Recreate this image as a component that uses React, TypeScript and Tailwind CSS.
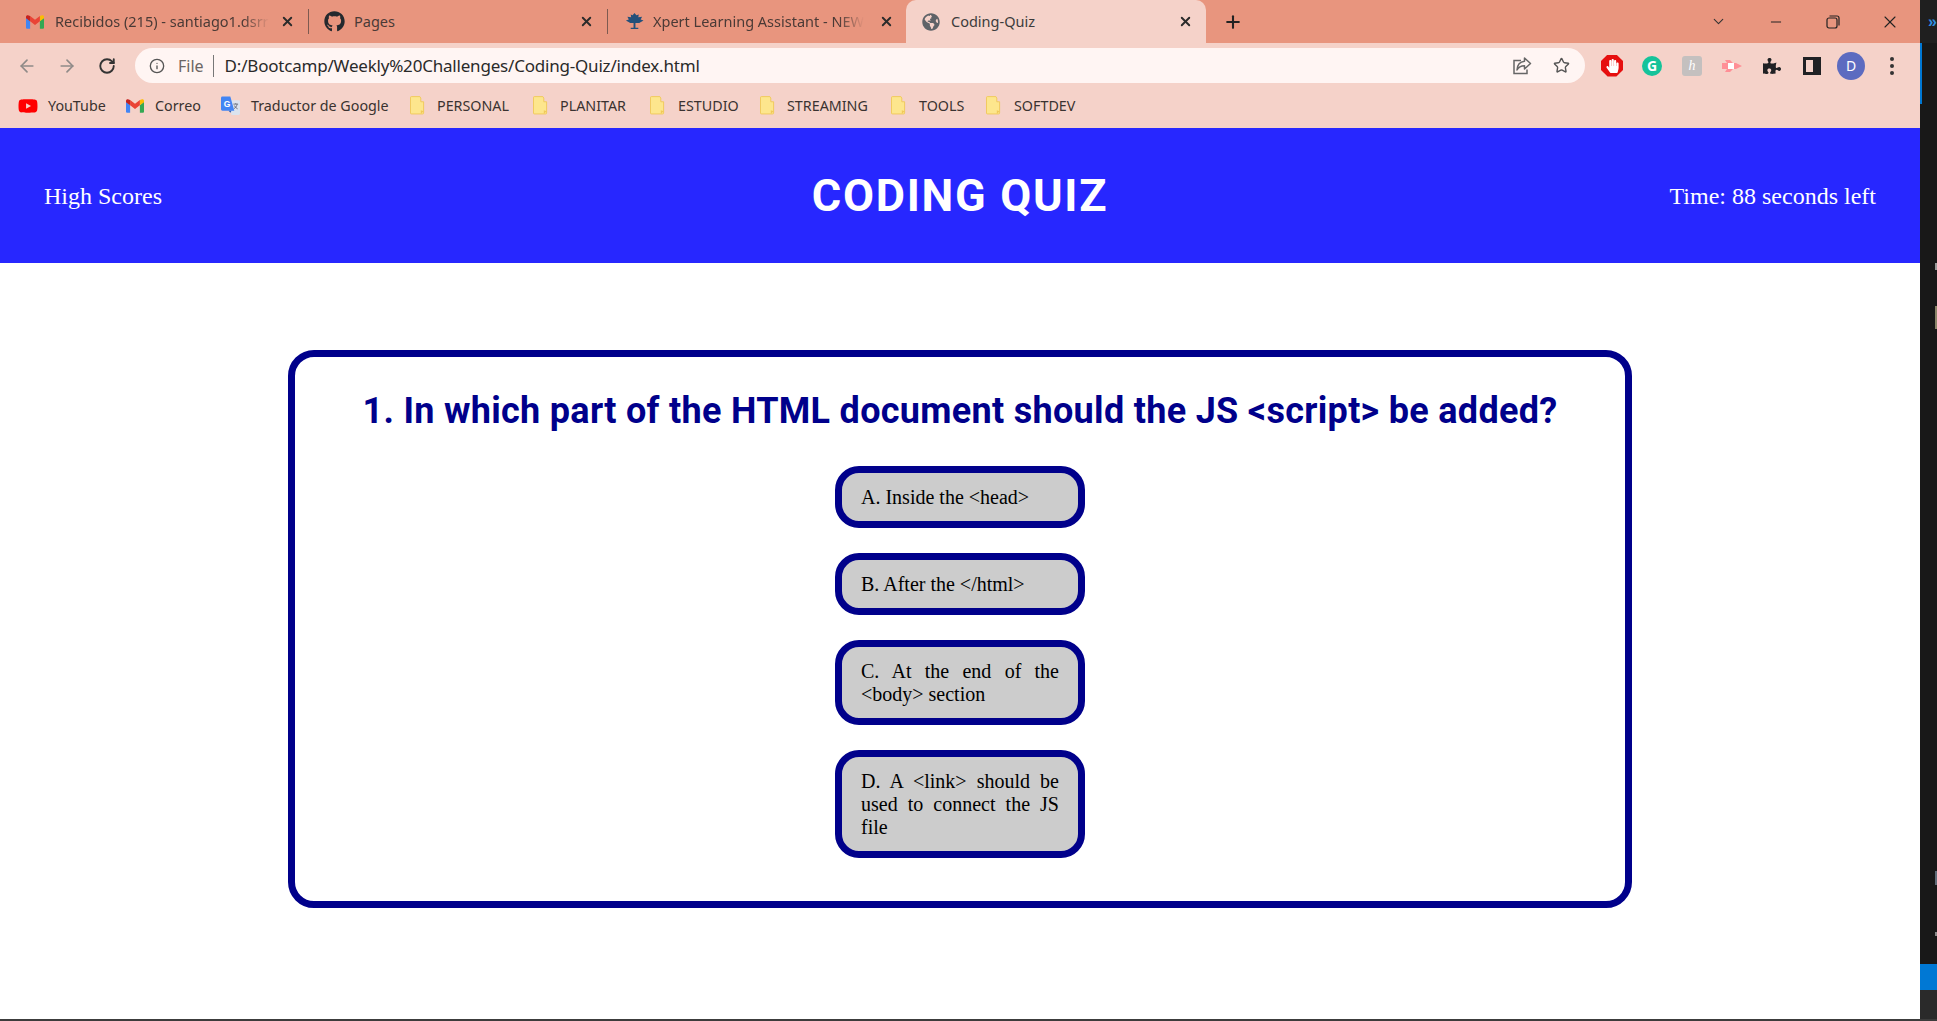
import { ChevronDown, Minus, X, Plus, ArrowLeft, ArrowRight, RotateCw, Info, Star } from 'lucide-react';
import { FaGithub, FaGlobeAmericas, FaPuzzlePiece, FaHandPaper, FaYoutube } from 'react-icons/fa';

const uiFont = "font-['Noto_Sans','Open_Sans',sans-serif]";

function GmailIcon({ className = 'w-[18px] h-[14px]' }: { className?: string }) {
  return (
    <svg viewBox="0 0 24 18" className={className}>
      <path d="M0 3v13.5A1.5 1.5 0 0 0 1.5 18H5.500V8z" fill="#4285f4" />
      <path d="M24 3v13.500a1.500 1.500 0 0 1-1.500 1.500H18.500V8z" fill="#34a853" />
      <path d="M18.500 1v7L24 4V2c0-1.800-2-2.700-3.400-1.700z" fill="#fbbc04" />
      <path d="M5.500 8V1L12 6l6.500-5v7L12 13z" fill="#ea4335" />
      <path d="M0 2v2l5.500 4V1L3.400.3C2 -.7 0 .2 0 2z" fill="#c5221f" />
    </svg>
  );
}

function TreeIcon() {
  return (
    <svg viewBox="0 0 20 20" className="w-[19px] h-[19px]" fill="#24507a">
      <path d="M10 1l2 2.500 2.500-1-.5 3 4-.5-1.500 3 3 1-4.500 2.500H11v5h3v1.500H6V16.500h3v-5H5.500L1 9l3-1-1.500-3 4 .5-.5-3L8 3.500z" />
    </svg>
  );
}

function TranslateIcon() {
  return (
    <svg viewBox="0 0 20 20" className="w-[19px] h-[20px]">
      <path d="M9 4h9.500A1.500 1.500 0 0 1 20 5.500V18a1.500 1.500 0 0 1-1.500 1.500H11z" fill="#dbe3ee" />
      <path d="M13 8h5M15.500 7v1M17 8c-.5 2.500-2 4-3.500 5M14 9.500c.7 1.500 2 2.800 3.500 3.500" stroke="#6b7280" strokeWidth="1" fill="none" />
      <path d="M1.500 0h8.300L14 15H1.500A1.500 1.500 0 0 1 0 13.500v-12A1.500 1.500 0 0 1 1.500 0z" fill="#4285f4" />
      <path d="M10 17l1-2h-3z" fill="#2f5fb5" />
      <text x="3" y="11" fontSize="9" fontWeight="700" fill="#fff" fontFamily="Liberation Sans">G</text>
    </svg>
  );
}

function Folder() {
  return (
    <svg viewBox="0 0 16 20" className="w-[15px] h-[19px]">
      <path d="M1.500.500h9l1 1.500v4h3v12a1 1 0 0 1-1 1h-12a1 1 0 0 1-1-1v-16.500a1 1 0 0 1 1-1z" fill="#fde68d" stroke="#f0c95a" />
      <path d="M11.500 15v4l3-3z" fill="#f0c95a" />
    </svg>
  );
}

function ShareIcon() {
  return (
    <svg viewBox="0 0 20 20" className="w-[20px] h-[20px] ml-auto" fill="none" stroke="#666" strokeWidth="1.500">
      <path d="M9 4.500H2v13h13v-4" />
      <path d="M12.500 2l6 5.500-6 5.500V9.800C9 9.800 6.500 11 5 14c.3-5 3-8.200 7.500-8.700z" strokeLinejoin="round" />
    </svg>
  );
}

function RestoreIcon() {
  return (
    <svg viewBox="0 0 14 14" className="w-[14px] h-[14px] ml-[42px]" fill="none" stroke="#222" strokeWidth="1.200">
      <rect x="1" y="3" width="10" height="10" rx="2" />
      <path d="M3.500 1h7.500a2 2 0 0 1 2 2v7.500" />
    </svg>
  );
}

const tabs = [
  { title: 'Recibidos (215) - santiago1.dsrr(', icon: <GmailIcon />, box: 'w-[309px] pl-[26px] pr-[14px]', gap: 'ml-[11px] w-[214px] [mask-image:linear-gradient(to_right,black_88%,transparent)]', line: true },
  { title: 'Pages', icon: <FaGithub className="w-[21px] h-[21px] text-[#24292e]" />, box: 'w-[299px] pl-[15px] pr-[14px]', gap: 'ml-[9px] w-[214px]', line: true },
  { title: 'Xpert Learning Assistant - NEW!', icon: <TreeIcon />, box: 'w-[298px] pl-[17px] pr-[12px]', gap: 'ml-[9px] w-[211px] [mask-image:linear-gradient(to_right,black_88%,transparent)]', line: false },
];

const bookmarks = [
  { label: 'YouTube', icon: <FaYoutube className="w-[20px] h-[20px] text-[#f00]" />, box: 'ml-[18px] w-[108px]', gap: 'ml-[10px]' },
  { label: 'Correo', icon: <GmailIcon />, box: 'w-[95px]', gap: 'ml-[11px]' },
  { label: 'Traductor de Google', icon: <TranslateIcon />, box: 'w-[189px]', gap: 'ml-[11px]' },
  { label: 'PERSONAL', icon: <Folder />, box: 'w-[123px]', gap: 'ml-[12px]' },
  { label: 'PLANITAR', icon: <Folder />, box: 'w-[117px]', gap: 'ml-[12px]' },
  { label: 'ESTUDIO', icon: <Folder />, box: 'w-[110px]', gap: 'ml-[13px]' },
  { label: 'STREAMING', icon: <Folder />, box: 'w-[131px]', gap: 'ml-[12px]' },
  { label: 'TOOLS', icon: <Folder />, box: 'w-[95px]', gap: 'ml-[13px]' },
  { label: 'SOFTDEV', icon: <Folder />, box: 'w-[100px]', gap: 'ml-[13px]' },
];

const answers = [
  'A. Inside the <head>',
  'B. After the </html>',
  'C. At the end of the <body> section',
  'D. A <link> should be used to connect the JS file',
];

function TabStrip() {
  return (
    <div className="h-[43px] bg-[#e8957e] flex items-center">
      {tabs.map((tab) => (
        <div key={tab.title} className={`h-[43px] flex items-center relative ${tab.box}`}>
          {tab.icon}
          <span className={`text-[14.5px] text-[#4a3a36] whitespace-nowrap overflow-hidden ${uiFont} ${tab.gap}`}>{tab.title}</span>
          <X className="w-[15px] h-[15px] text-[#2b2b2b] ml-auto" strokeWidth={3} />
          {tab.line && <div className="absolute right-0 top-[9px] h-[25px] w-px bg-[#7d5a50]" />}
        </div>
      ))}
      <div className="w-[300px] h-[43px] bg-[#f5d2c9] rounded-t-[10px] flex items-center pl-[16px] pr-[13px]">
        <FaGlobeAmericas className="w-[18px] h-[18px] text-[#5f6368]" />
        <span className={`ml-[11px] text-[14.5px] text-[#3c3c3c] ${uiFont}`}>Coding-Quiz</span>
        <X className="w-[15px] h-[15px] text-[#2b2b2b] ml-auto" strokeWidth={3} />
      </div>
      <Plus className="w-[20px] h-[20px] ml-[17px] text-[#222]" strokeWidth={2.5} />
      <ChevronDown className="w-[17px] h-[17px] ml-[467px] text-[#333]" strokeWidth={1.500} />
      <Minus className="w-[16px] h-[16px] ml-[41px] text-[#222]" strokeWidth={1.500} />
      <RestoreIcon />
      <X className="w-[20px] h-[20px] ml-[40px] text-[#222]" strokeWidth={1.300} />
    </div>
  );
}

function Toolbar() {
  return (
    <div className="h-[45px] bg-[#f5d2c9] flex items-center">
      <ArrowLeft className="w-[20px] h-[20px] ml-[17px] text-[#8f8a88]" strokeWidth={2} />
      <ArrowRight className="w-[20px] h-[20px] ml-[20px] text-[#8f8a88]" strokeWidth={2} />
      <RotateCw className="w-[18px] h-[18px] ml-[21px] text-[#333]" strokeWidth={2.500} />
      <div className="ml-[19px] w-[1450px] h-[35px] rounded-full bg-[#fff5f3] flex items-center">
        <Info className="w-[16px] h-[16px] ml-[14px] text-[#555]" strokeWidth={2} />
        <span className={`ml-[13px] text-[16px] text-[#6b6563] ${uiFont}`}>File</span>
        <div className="ml-[9px] w-px h-[22px] bg-[#777]" />
        <span className={`ml-[11px] text-[17px] tracking-[-0.2px] text-[#2a2a2a] ${uiFont}`}>D:/Bootcamp/Weekly%20Challenges/Coding-Quiz/index.html</span>
        <ShareIcon />
        <Star className="w-[17px] h-[17px] ml-[21px] mr-[15px] text-[#555]" strokeWidth={2} />
      </div>
      <div className="ml-[16px] w-[22px] h-[22px] bg-[#e60f0f] [clip-path:polygon(30%_0,70%_0,100%_30%,100%_70%,70%_100%,30%_100%,0_70%,0_30%)] flex items-center justify-center">
        <FaHandPaper className="w-[13px] h-[14px] text-white" />
      </div>
      <div className={`ml-[19px] w-[20px] h-[20px] rounded-full bg-[#15c39a] flex items-center justify-center text-white text-[14px] font-bold ${uiFont}`}>G</div>
      <div className="ml-[20px] w-[20px] h-[20px] rounded-[3px] bg-[#c4c0bf] flex items-center justify-center text-white text-[14px] italic font-['Liberation_Serif',serif]">h</div>
      <svg viewBox="0 0 20 16" className="ml-[20px] w-[20px] h-[16px]">
        <path d="M0 5h5L3 2h5l3 3h3l6 3-6 3h-3l-3 3H3l2-3H0z" fill="#ff8f96" />
        <rect x="6" y="5" width="6" height="6" fill="#fff" />
      </svg>
      <FaPuzzlePiece className="ml-[21px] w-[18px] h-[18px] text-[#202124]" />
      <div className="ml-[22px] w-[18px] h-[18px] bg-[#202124] flex pl-[3px] py-[3px] pr-[8px]">
        <div className="flex-1 bg-[#f5d2c9]" />
      </div>
      <div className={`ml-[16px] w-[28px] h-[28px] rounded-full bg-[#5c6bc0] flex items-center justify-center text-white text-[14px] ${uiFont}`}>D</div>
      <div className="ml-[25px] flex flex-col gap-[3px]">
        <div className="w-[4px] h-[4px] rounded-full bg-[#333]" />
        <div className="w-[4px] h-[4px] rounded-full bg-[#333]" />
        <div className="w-[4px] h-[4px] rounded-full bg-[#333]" />
      </div>
    </div>
  );
}

function Bookmarks() {
  return (
    <div className="h-[40px] pb-[5px] bg-[#f5d2c9] flex items-center">
      {bookmarks.map((b) => (
        <div key={b.label} className={`flex items-center ${b.box}`}>
          {b.icon}
          <span className={`text-[14.3px] text-[#3a3230] whitespace-nowrap ${uiFont} ${b.gap}`}>{b.label}</span>
        </div>
      ))}
    </div>
  );
}

export default function App() {
  return (
    <div className="w-[1937px] h-[1021px] flex flex-col overflow-hidden bg-white">
      <div className="flex flex-1 min-h-0">
        <div className="w-[1920px] flex flex-col">
          <TabStrip />
          <Toolbar />
          <Bookmarks />
          <header className="h-[135px] bg-[#2727ff] flex items-center justify-between pl-[44px] pr-[44px] text-white font-['Liberation_Serif',serif] text-[24px]">
            <span className="w-[400px]">High Scores</span>
            <h1 className="text-[45px] font-bold tracking-[1.7px] font-['Roboto',sans-serif]">CODING QUIZ</h1>
            <span className="w-[400px] text-right">Time: 88 seconds left</span>
          </header>
          <main className="flex-1 pt-[87px] pl-[288px]">
            <div className="w-[1344px] h-[558px] border-[7px] border-[#00008b] rounded-[26px] flex flex-col items-center pt-[32px]">
              <h2 className="text-[36px] leading-[44px] font-bold tracking-[0.3px] text-[#00008b] font-['Roboto',sans-serif]">
                1. In which part of the HTML document should the JS &lt;script&gt; be added?
              </h2>
              <div className="mt-[33px] flex flex-col gap-[25px]">
                {answers.map((a) => (
                  <button key={a} className="w-[250px] border-[7px] border-[#00008b] rounded-[24px] bg-[#cccccc] px-[19px] py-[12.5px] text-justify text-[20px] leading-[23px] text-black font-['Liberation_Serif',serif]">
                    {a}
                  </button>
                ))}
              </div>
            </div>
          </main>
        </div>
        <aside className="w-[17px] bg-[#181818] flex flex-col">
          <div className="h-[43px] bg-[#1f1f1f] flex items-center justify-end">
            <span className="text-[#2f8fe0] text-[16px] font-bold leading-none font-['Liberation_Sans',sans-serif]">»</span>
          </div>
          <div className="h-[61px] w-[2px] bg-[#0078d4]" />
          <div className="mt-[159px] ml-[15px] w-[2px] h-[7px] bg-[#9a9a9a]" />
          <div className="mt-[36px] ml-[15px] w-[2px] h-[23px] bg-[#8a8468]" />
          <div className="mt-[542px] ml-[15px] w-[2px] h-[14px] bg-[#5f6b78]" />
          <div className="mt-[47px] ml-[15px] w-[2px] h-[4px] bg-[#8a8a8a]" />
          <div className="mt-auto h-[26px] bg-[#0078d4]" />
          <div className="h-[29px] bg-[#2a2a2a]" />
        </aside>
      </div>
      <div className="h-[2px] bg-[#3c3c3c]" />
    </div>
  );
}
